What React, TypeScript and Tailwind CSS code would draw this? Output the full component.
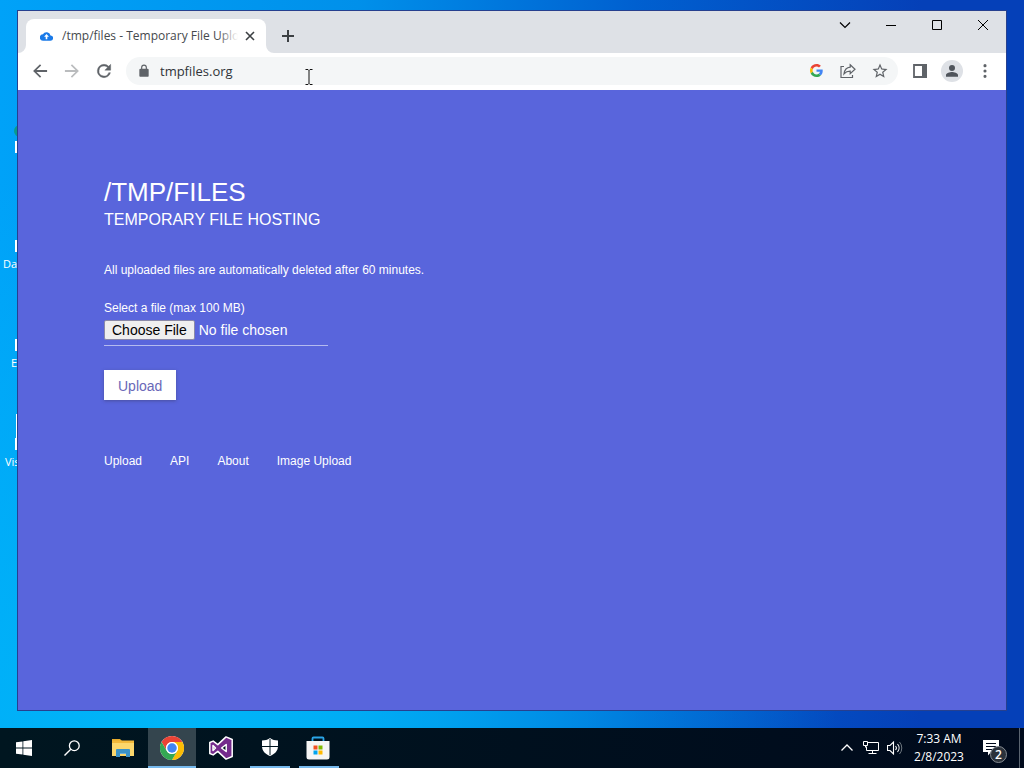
import React from "react";

function CloudIcon() {
  return (
    <svg viewBox="0 0 24 24" className="h-[13px] w-[13px] shrink-0" aria-hidden="true">
      <path fill="#1a7ae8" d="M19.400 10A7.500 7.500 0 0 0 5.400 8 6 6 0 0 0 6 20h13a5 5 0 0 0 .4-10z" />
      <path fill="#fff" d="M12 7.500l-4.500 5H10.500V17h3v-4.500h3z" />
    </svg>
  );
}

function GoogleIcon() {
  return (
    <svg viewBox="0 0 48 48" className="h-[13px] w-[13px]" aria-hidden="true">
      <path fill="#EA4335" d="M24 9.500c3.540 0 6.710 1.220 9.210 3.600l6.850-6.850C35.900 2.380 30.470 0 24 0 14.620 0 6.510 5.380 2.560 13.220l7.980 6.190C12.430 13.720 17.740 9.500 24 9.500z" />
      <path fill="#4285F4" d="M46.980 24.550c0-1.570-.15-3.090-.38-4.550H24v9.020h12.940c-.58 2.960-2.260 5.480-4.780 7.180l7.730 6c4.510-4.180 7.090-10.360 7.090-17.650z" />
      <path fill="#FBBC05" d="M10.530 28.590c-.48-1.450-.76-2.990-.76-4.590s.27-3.140.76-4.590l-7.980-6.190C.92 16.460 0 20.120 0 24s.92 7.540 2.560 10.780l7.970-6.190z" />
      <path fill="#34A853" d="M24 48c6.480 0 11.930-2.130 15.890-5.810l-7.730-6c-2.150 1.450-4.920 2.300-8.160 2.300-6.260 0-11.570-4.220-13.470-9.910l-7.980 6.190C6.510 42.620 14.620 48 24 48z" />
    </svg>
  );
}

function Glyph({ d, size = "h-[18px] w-[18px]", fill = "#5f6368" }: { d: string; size?: string; fill?: string }) {
  return (
    <svg viewBox="0 0 24 24" className={size} aria-hidden="true">
      <path fill={fill} d={d} />
    </svg>
  );
}

function TabStrip() {
  return (
    <div className="flex h-[42px] items-end bg-[#dee1e6] pl-2">
      <div className="relative flex h-[34px] w-[240px] items-center rounded-t-lg bg-white pr-2 pl-[14px]">
        <svg viewBox="0 0 8 8" className="absolute bottom-0 -left-2 h-2 w-2" aria-hidden="true">
          <path fill="#fff" d="M8 0v8H0a8 8 0 0 0 8-8z" />
        </svg>
        <svg viewBox="0 0 8 8" className="absolute -right-2 bottom-0 h-2 w-2" aria-hidden="true">
          <path fill="#fff" d="M0 0v8h8a8 8 0 0 1-8-8z" />
        </svg>
        <CloudIcon />
        <span className="relative ml-[9px] flex-1 overflow-hidden text-[12px] leading-4 whitespace-nowrap text-[#45494d]">
          /tmp/files - Temporary File Upload
          <span className="absolute inset-y-0 right-0 w-5 bg-linear-to-r from-transparent to-white" />
        </span>
        <button aria-label="Close tab" className="ml-1 flex h-4 w-4 items-center justify-center">
          <svg viewBox="0 0 10 10" className="h-[10px] w-[10px]" aria-hidden="true">
            <path d="M1 1l8 8M9 1l-8 8" stroke="#3c4043" strokeWidth="1.600" />
          </svg>
        </button>
      </div>
      <button aria-label="New tab" className="ml-[14px] flex h-[34px] w-4 items-center justify-center">
        <svg viewBox="0 0 12 12" className="h-3 w-3" aria-hidden="true">
          <path d="M6 0v12M0 6h12" stroke="#3c4043" strokeWidth="2" />
        </svg>
      </button>
      <div className="ml-auto flex self-start">
        <button aria-label="Search tabs" className="flex h-7 w-[46px] items-center justify-center">
          <svg viewBox="0 0 12 12" className="h-3 w-3" aria-hidden="true">
            <path d="M1 3.500l5 5 5-5" fill="none" stroke="#000" strokeWidth="1.200" />
          </svg>
        </button>
        <button aria-label="Minimize" className="flex h-7 w-[46px] items-center justify-center">
          <svg viewBox="0 0 12 12" className="h-3 w-3" aria-hidden="true">
            <path d="M1 6.500h10" stroke="#000" />
          </svg>
        </button>
        <button aria-label="Maximize" className="flex h-7 w-[46px] items-center justify-center">
          <svg viewBox="0 0 12 12" className="h-3 w-3" aria-hidden="true">
            <path d="M1.500 1.500h9v9h-9z" fill="none" stroke="#000" />
          </svg>
        </button>
        <button aria-label="Close" className="flex h-7 w-[46px] items-center justify-center">
          <svg viewBox="0 0 12 12" className="h-3 w-3" aria-hidden="true">
            <path d="M1 1l10 10M11 1L1 11" stroke="#000" />
          </svg>
        </button>
      </div>
    </div>
  );
}

function Toolbar() {
  return (
    <div className="flex h-[37px] items-center bg-white px-3 pb-[2px]">
      <div className="flex gap-3">
        <button aria-label="Back" className="flex w-5 justify-center">
          <Glyph size="h-5 w-5" d="M20.500 10.800H7.830l5.590-5.390L12 3.800 3.700 12l8.300 8.200 1.410-1.610L7.830 13.200H20.500z" />
        </button>
        <button aria-label="Forward" className="flex w-5 justify-center">
          <Glyph size="h-5 w-5" fill="#babcbe" d="M12 3.800l-1.410 1.610 5.580 5.390H3.500v2.400h12.670l-5.580 5.390L12 20.200l8.300-8.200z" />
        </button>
        <button aria-label="Reload" className="flex w-5 justify-center">
          <svg viewBox="0 0 24 24" className="h-5 w-5" aria-hidden="true">
            <path
              d="M17.650 6.350A7.960 7.960 0 0 0 12 4a8 8 0 1 0 7.730 10h-2.080A6 6 0 1 1 12 6c1.660 0 3.140.69 4.220 1.780L13 11h7V4l-2.350 2.350z"
              fill="#5f6368"
              stroke="#5f6368"
              strokeWidth=".5"
            />
          </svg>
        </button>
      </div>
      <div className="ml-3 flex h-7 flex-1 items-center rounded-full bg-[#f4f6f7] pr-[9px] pl-[10px]">
        <Glyph
          size="h-[14px] w-4"
          d="M18 8h-1V6A5 5 0 0 0 7 6v2H6a2 2 0 0 0-2 2v10c0 1.100.9 2 2 2h12a2 2 0 0 0 2-2V10a2 2 0 0 0-2-2zM9 6a3 3 0 0 1 6 0v2H9V6z"
        />
        <input
          aria-label="Address and search bar"
          defaultValue="tmpfiles.org"
          className="ml-2 min-w-0 flex-1 bg-transparent text-[13px] leading-5 text-[#303438] outline-none"
        />
        <div className="flex gap-[14px]">
          <button aria-label="Search with Google" className="flex w-[18px] items-center justify-center">
            <GoogleIcon />
          </button>
          <button aria-label="Share this page" className="flex w-[18px] justify-center">
            <svg viewBox="0 0 18 18" className="h-[18px] w-[18px]" aria-hidden="true">
              <path
                d="M5 4.500H2v11h11.500V13M11.200 2.800l4.800 4.400-4.800 4.400V9.200c-2.700 0-4.600.8-6.200 2.600.5-3.700 2.700-6.200 6.200-6.600z"
                fill="none"
                stroke="#5f6368"
                strokeWidth="1.200"
              />
            </svg>
          </button>
          <button aria-label="Bookmark this tab" className="flex w-[18px] justify-center">
            <Glyph d="M22 9.240l-7.190-.62L12 2 9.190 8.630 2 9.240l5.460 4.730L5.820 21 12 17.270 18.180 21l-1.630-7.030L22 9.240zM12 15.400l-3.760 2.270 1-4.280-3.320-2.880 4.380-.38L12 6.100l1.710 4.040 4.380.38-3.320 2.880 1 4.280L12 15.400z" />
          </button>
        </div>
      </div>
      <div className="ml-3 flex items-center gap-[11px]">
        <button aria-label="Side panel" className="flex w-5 justify-center">
          <svg viewBox="0 0 14 14" className="h-[14px] w-[14px]" aria-hidden="true">
            <path d="M1 1h12v12H1z" fill="none" stroke="#5f6368" strokeWidth="1.800" />
            <path d="M9 0h5v14H9z" fill="#5f6368" />
          </svg>
        </button>
        <button aria-label="Profile" className="flex h-[22px] w-[22px] items-center justify-center rounded-full bg-[#dee1e6]">
          <Glyph
            size="h-4 w-4"
            fill="#50555c"
            d="M12 12a4.500 4.500 0 1 0 0-9 4.500 4.500 0 0 0 0 9zm0 1.500c-3 0-9 1.500-9 4.500v2.500h18V18c0-3-6-4.500-9-4.500z"
          />
        </button>
        <button aria-label="Menu" className="ml-[2px] flex w-[18px] justify-center">
          <Glyph d="M12 7a2.100 2.100 0 1 0 0-4.200A2.100 2.100 0 0 0 12 7zm0 2.900a2.100 2.100 0 1 0 0 4.200 2.100 2.100 0 0 0 0-4.200zm0 7.100a2.100 2.100 0 1 0 0 4.200 2.100 2.100 0 0 0 0-4.200z" />
        </button>
      </div>
    </div>
  );
}

function Page() {
  return (
    <main className="flex-1 bg-[#5965dc] pt-[86px] pl-[86px] font-['Liberation_Sans',Arial,sans-serif] text-[12px] leading-4 text-white">
      <h1 className="text-[26px] leading-8">/TMP/FILES</h1>
      <h2 className="text-[16px] leading-6">TEMPORARY FILE HOSTING</h2>
      <p className="mt-[30px]">All uploaded files are automatically deleted after 60 minutes.</p>
      <form className="mt-[22px] flex flex-col items-start" onSubmit={(e) => e.preventDefault()}>
        <label htmlFor="file">Select a file (max 100 MB)</label>
        <input
          id="file"
          type="file"
          className="mt-1 h-[26px] w-[224px] border-b border-[#b4baef] text-[14px] leading-5 file:mr-1 file:h-5 file:rounded-xs file:border file:border-[#8a8aa8] file:bg-[#efefef] file:px-[7px] file:leading-4 file:text-black"
        />
        <button type="submit" className="mt-6 h-[30px] bg-white px-[14px] pt-[2px] text-[14px] text-[#6a68b8] shadow-[0_1px_3px_rgba(60,60,100,0.5)]">
          Upload
        </button>
      </form>
      <nav className="mt-[53px] flex gap-7">
        <a href="#upload">Upload</a>
        <a href="#api">API</a>
        <a href="#about">About</a>
        <a href="#image-upload">Image Upload</a>
      </nav>
    </main>
  );
}

function DesktopIcons() {
  return (
    <div className="absolute inset-y-0 left-0 w-[17px] overflow-hidden text-[11px] leading-4 whitespace-nowrap text-white">
      <span className="absolute top-[125px] left-[14px] h-3 w-2 rounded-l-full bg-[#0b9a8c]" />
      <span className="absolute top-[141px] left-[15px] h-3 w-2 bg-white" />
      <span className="absolute top-[240px] left-[15px] h-3 w-2 bg-white" />
      <span className="absolute top-[256px] left-[3px]">Da</span>
      <span className="absolute top-[339px] left-[15px] h-3 w-2 bg-white" />
      <span className="absolute top-[355px] left-[11px]">E</span>
      <span className="absolute top-[414px] left-[16px] h-6 w-2 bg-white" />
      <span className="absolute top-[438px] left-[15px] h-3 w-2 bg-white" />
      <span className="absolute top-[454px] left-[5px]">Vis</span>
    </div>
  );
}

function Taskbar() {
  return (
    <footer className="flex h-10 items-stretch bg-linear-to-r from-[#001620] to-[#000a1c] text-white">
      <button aria-label="Start" className="flex w-12 items-center justify-center">
        <svg viewBox="0 0 16 16" className="h-4 w-4" aria-hidden="true">
          <path fill="#fff" d="M0 2.300l6.500-.9v6.100H0zM7.300 1.300L16 0v7.500H7.300zM0 8.400h6.500v6.200L0 13.700zM7.300 8.400H16V16l-8.700-1.300z" />
        </svg>
      </button>
      <button aria-label="Search" className="flex w-12 items-center justify-center">
        <svg viewBox="0 0 16 16" className="h-4 w-4" aria-hidden="true">
          <circle cx="10.300" cy="5.700" r="4.900" fill="none" stroke="#fff" strokeWidth="1.300" />
          <path d="M6.800 9.200L.5 15.500" stroke="#fff" strokeWidth="1.400" />
        </svg>
      </button>
      <button aria-label="File Explorer" className="flex w-[52px] items-center justify-center pl-[2px]">
        <svg viewBox="0 0 22 18" className="h-[18px] w-[22px]" aria-hidden="true">
          <path fill="#e8ab2c" d="M0 0h8l2 2H0z" />
          <path fill="#f2b93b" d="M0 1.500h22V6H0z" />
          <path fill="#fcd76c" d="M0 4h22v13H0z" />
          <path fill="#3a92c8" d="M4 18v-7a1 1 0 0 1 1-1h12a1 1 0 0 1 1 1v7h-4v-4H8v4z" />
          <path fill="#6cb0d8" d="M8 14h6v1H8z" />
        </svg>
      </button>
      <button aria-label="Google Chrome" className="flex w-12 items-center justify-center border-b-2 border-[#76b9ed] bg-[#34454e] pt-[2px]">
        <svg viewBox="0 0 48 48" className="h-6 w-6" aria-hidden="true">
          <circle cx="24" cy="24" r="24" fill="#fff" />
          <path fill="#ea4335" d="M24 0A24 24 0 0 1 44.800 12H24a12 12 0 0 0-10.400 18L3.200 12A24 24 0 0 1 24 0z" />
          <path fill="#fbbc05" d="M44.800 12A24 24 0 0 1 24 48l10.400-18A12 12 0 0 0 24 12z" />
          <path fill="#34a853" d="M24 48A24 24 0 0 1 3.200 12l10.400 18a12 12 0 0 0 20.800 0z" />
          <circle cx="24" cy="24" r="12" fill="#fff" />
          <circle cx="24" cy="24" r="9.500" fill="#4285f4" />
        </svg>
      </button>
      <button aria-label="Visual Studio" className="flex w-[50px] items-center justify-center">
        <svg viewBox="0 0 24 24" className="h-6 w-6" aria-hidden="true">
          <path
            fill="#742a8c"
            fillRule="evenodd"
            stroke="#fff"
            strokeWidth="1.500"
            strokeLinejoin="round"
            d="M17 .9l6.200 2.600v17L17 23.100l-8.200-7.700-4.600 3.500-3.400-1.400V6.500l3.400-1.400 4.600 3.500zM17.200 8.500L12.600 12l4.600 3.500zM4 9.500v5L6.500 12z"
          />
        </svg>
      </button>
      <button aria-label="Windows Security" className="mx-1 flex w-10 items-center justify-center border-b-2 border-[#76b9ed]">
        <svg viewBox="0 0 18 18" className="h-[18px] w-[18px]" aria-hidden="true">
          <path fill="#fff" d="M9 0c2.500 1.800 5 2.400 8 2.500V8c0 5-3.200 8-8 10-4.800-2-8-5-8-10V2.500C4 2.400 6.500 1.800 9 0z" />
          <path d="M9 1v16M1 8.500h16" stroke="#001620" />
        </svg>
      </button>
      <button aria-label="Microsoft Store" className="ml-[5px] flex w-10 items-center justify-center border-b-2 border-[#76b9ed] pt-[2px] pr-[2px]">
        <svg viewBox="0 0 24 24" className="h-6 w-6" aria-hidden="true">
          <path d="M6.500 6V2.500a1 1 0 0 1 1-1h9a1 1 0 0 1 1 1V6" fill="none" stroke="#2aa5e8" strokeWidth="1.800" />
          <path fill="#f5f5f5" d="M.5 5h23v16a2.500 2.500 0 0 1-2.500 2.500H3A2.500 2.500 0 0 1 .5 21z" />
          <path fill="#f25022" d="M7.500 9.500h4v4h-4z" />
          <path fill="#7fba00" d="M12.500 9.500h4v4h-4z" />
          <path fill="#00a4ef" d="M7.500 14.500h4v4h-4z" />
          <path fill="#ffb900" d="M12.500 14.500h4v4h-4z" />
        </svg>
      </button>
      <div className="ml-auto flex items-center">
        <button aria-label="Show hidden icons" className="flex w-6 justify-center">
          <svg viewBox="0 0 12 12" className="h-3 w-3" aria-hidden="true">
            <path d="M.5 8.500L6 3l5.500 5.500" fill="none" stroke="#fff" strokeWidth="1.300" />
          </svg>
        </button>
        <button aria-label="Network" className="flex w-6 justify-center">
          <svg viewBox="0 0 16 14" className="h-[14px] w-4" aria-hidden="true">
            <path d="M5 1.500h10.500v8h-12V5.500M9.500 9.500v3M5.500 12.500h8M.5.5h4v4h-4zM2.500 4.500v2" fill="none" stroke="#fff" />
          </svg>
        </button>
        <button aria-label="Volume" className="flex w-6 justify-center">
          <svg viewBox="0 0 16 16" className="h-4 w-4" aria-hidden="true">
            <path d="M.5 5.500H3L6.500 2v12L3 10.500H.5zM8.500 6a3 3 0 0 1 0 4M10.500 4a6 6 0 0 1 0 8" fill="none" stroke="#fff" strokeWidth="1.100" />
            <path d="M12.500 2a9 9 0 0 1 0 12" fill="none" stroke="#6f7880" />
          </svg>
        </button>
        <div className="w-16 text-center text-[12px] leading-[18px]">
          <div>7:33 AM</div>
          <div>2/8/2023</div>
        </div>
        <button aria-label="Notifications, 2 new" className="relative ml-[7px] h-10 w-[41px]">
          <svg viewBox="0 0 16 16" className="absolute top-3 left-[5px] h-4 w-4" aria-hidden="true">
            <path fill="#fff" d="M0 0h16v12H8l-3 3.500V12H0z" />
            <path d="M3 3.500h10M3 6.500h10M3 9.500h7" stroke="#000a1c" />
          </svg>
          <span className="absolute top-[18px] left-3 flex h-[17px] w-[17px] items-center justify-center rounded-full border border-[#858b92] bg-[#2b323b] text-[12px] leading-none font-semibold">
            2
          </span>
        </button>
        <span className="h-10 w-[5px] border-l border-[#5a6470]" />
      </div>
    </footer>
  );
}

export default function App() {
  return (
    <div className="flex min-h-screen flex-col font-['Open_Sans','Noto_Sans',sans-serif]">
      <div className="relative flex flex-1 flex-col bg-[radial-gradient(ellipse_at_18%_100%,#00b6f8,transparent_55%),linear-gradient(to_right,#00a2f8_0%,#0090ea_35%,#0060d0_62%,#0540b8_90%)] px-[17px] pt-[10px] pb-[17px]">
        <DesktopIcons />
        <div className="relative flex flex-1 flex-col border border-[#26408f]">
          <TabStrip />
          <Toolbar />
          <Page />
        </div>
        <svg viewBox="0 0 8 16" className="absolute top-[69px] left-[305px] h-4 w-2" aria-hidden="true">
          <path d="M.5.5h2.500l1 1 1-1h2.500M4 1.500v13M.5 15.500h2.500l1-1 1 1h2.500" fill="none" stroke="#111" />
        </svg>
      </div>
      <Taskbar />
    </div>
  );
}
